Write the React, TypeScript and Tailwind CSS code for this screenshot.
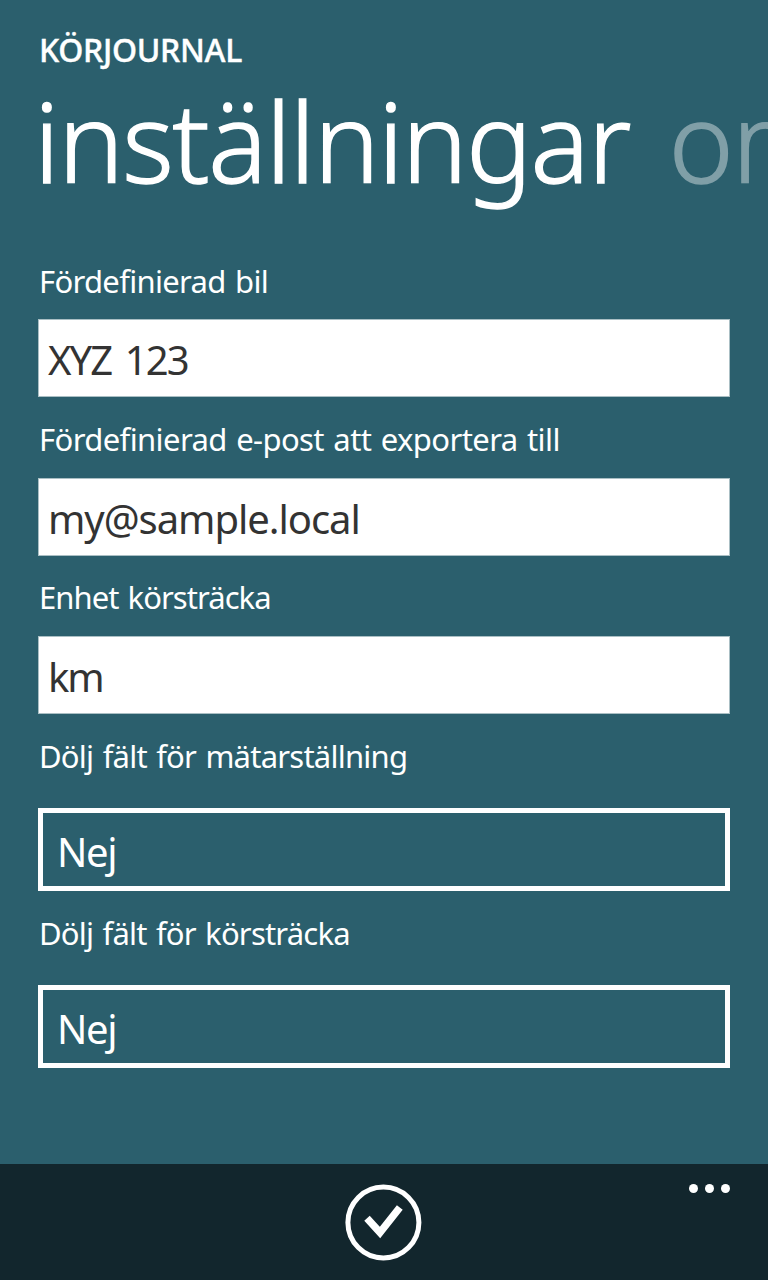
const inputs = [
  { label: 'Fördefinierad bil', spacing: 'tracking-[-0.68px]', value: 'XYZ 123', valueSpacing: 'tracking-[-1.9px] [word-spacing:5px]' },
  { label: 'Fördefinierad e-post att exportera till', spacing: 'tracking-[-0.6px]', value: 'my@sample.local', valueSpacing: 'tracking-[-1.05px]' },
  { label: 'Enhet körsträcka', spacing: 'tracking-[-0.95px]', value: 'km', valueSpacing: 'tracking-[-2px]' },
];

const pickers = [
  { label: 'Dölj fält för mätarställning', spacing: 'tracking-[-0.76px]', value: 'Nej' },
  { label: 'Dölj fält för körsträcka', spacing: 'tracking-[-0.78px]', value: 'Nej' },
];

const labelText = 'pl-px text-[31px] leading-[40px] [word-spacing:2px]';

export default function App() {
  return (
    <div className="flex h-[1280px] w-[768px] flex-col overflow-hidden bg-[#2b5f6d] font-['Noto_Sans','Open_Sans',sans-serif] text-white">
      <header className="shrink-0 overflow-hidden pl-[38px] pt-[30px]">
        <h1 className="h-10 pl-px text-[32px] font-medium leading-10 tracking-[-0.3px] [-webkit-text-stroke:0.4px]">KÖRJOURNAL</h1>
        <div className="-ml-[4px] flex h-[160px] gap-[39px] whitespace-nowrap text-[110px] font-light leading-[140px] tracking-[-1.5px] [-webkit-text-stroke:1.4px]">
          <span>inställningar</span>
          <span className="opacity-40">om</span>
        </div>
      </header>
      <main className="flex grow flex-col px-[38px] pt-[31px]">
        {inputs.map((f) => (
          <label key={f.label} className="flex h-[158.2px] flex-col">
            <span className={`h-[58.4px] ${labelText} ${f.spacing}`}>{f.label}</span>
            <span className={`h-[78px] border border-white/60 bg-white bg-clip-padding pl-[9px] text-[40px] leading-[79px] text-[#333] ${f.valueSpacing}`}>{f.value}</span>
          </label>
        ))}
        {pickers.map((f) => (
          <div key={f.label} className="flex h-[177.4px] flex-col">
            <span className={`h-[72.4px] ${labelText} ${f.spacing}`}>{f.label}</span>
            <button className="h-[83px] border-[5px] border-white pl-[14px] text-left text-[40px] leading-[78px] tracking-[-1.3px]">{f.value}</button>
          </div>
        ))}
      </main>
      <footer className="relative flex h-[116px] shrink-0 justify-center bg-[#12262d] pt-[20px]">
        <svg width="78" height="78" viewBox="0 0 78 78" fill="none" stroke="white">
          <circle cx="38.4" cy="38.5" r="35.5" strokeWidth="5" />
          <path d="M22 34.2 L35 48.5 L54.8 23.5" strokeWidth="7.4" />
        </svg>
        <div className="absolute right-[38px] top-[20px] flex gap-[7px]">
          <i className="size-[9px] rounded-full bg-white" />
          <i className="size-[9px] rounded-full bg-white" />
          <i className="size-[9px] rounded-full bg-white" />
        </div>
      </footer>
    </div>
  );
}
